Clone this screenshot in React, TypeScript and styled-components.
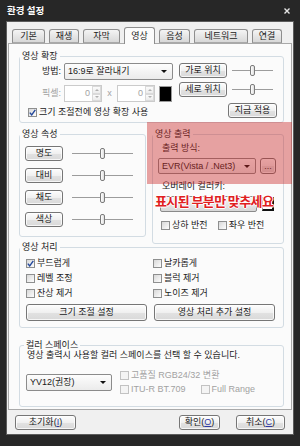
import styled, { createGlobalStyle } from "styled-components";

const GlobalStyle = createGlobalStyle`
  * { box-sizing: border-box; }
  html, body { margin: 0; padding: 0; background: #262626; }
  body {
    font-family: "Liberation Sans", "Noto Sans CJK KR", sans-serif;
    font-size: 9px;
    line-height: 11px;
    color: #1a1a1a;
  }
  button { font: inherit; color: inherit; }
`;

const Window = styled.div`
  width: 300px;
  height: 446px;
  display: flex;
  flex-direction: column;
  padding: 0 6px 11px;
  background: #272727;
`;

const TitleBar = styled.div`
  height: 21px;
  display: flex;
  align-items: center;
  justify-content: space-between;
  padding: 0 4px 0 1px;
  color: #fff;
  font-family: "Noto Sans CJK KR", sans-serif;
  font-size: 9.5px;
  font-weight: 700;
`;

const Panel = styled.div`
  position: relative;
  flex: 1;
  display: flex;
  flex-direction: column;
  background: #f0f0f0;
  border: 1px solid #5c5c5c;
`;

const TabStrip = styled.div`
  height: 21px;
  display: flex;
  align-items: flex-end;
  gap: 4px;
  padding-left: 5px;
`;

const Tab = styled.div<{ $w: number; $active?: boolean }>`
  position: relative;
  z-index: 1;
  width: ${(p) => p.$w}px;
  height: ${(p) => (p.$active ? 17 : 14)}px;
  margin-bottom: ${(p) => (p.$active ? -1 : 0)}px;
  display: flex;
  align-items: center;
  justify-content: center;
  padding-top: ${(p) => (p.$active ? 0 : 1)}px;
  border: 1px solid #8e8e8e;
  border-bottom: ${(p) => (p.$active ? "none" : "1px solid #a9a9a9")};
  border-radius: 3px 3px 0 0;
  background: ${(p) => (p.$active ? "#fbfbfb" : "linear-gradient(#f4f4f4, #d8d8d8)")};
  color: #222;
`;

const TabPage = styled.div`
  height: 367px;
  margin: 0 1px;
  padding: 7px 7px 0 10px;
  display: flex;
  flex-direction: column;
  background: #fbfbfb;
  border: 1px solid #a9a9a9;
`;

const Footer = styled.div`
  flex: 1;
  display: flex;
  align-items: center;
  gap: 16px;
  padding: 0 8px;
`;

const Spacer = styled.div`
  flex: 1;
`;

const Group = styled.fieldset<{ $h: number; $w?: number; $mt?: number }>`
  margin: ${(p) => p.$mt ?? 0}px 0 0;
  padding: 0;
  min-width: 0;
  width: ${(p) => (p.$w ? `${p.$w}px` : "auto")};
  height: ${(p) => p.$h}px;
  border: 1px solid #d3dce3;
  border-radius: 3px;
`;

const Legend = styled.legend<{ $indent?: number }>`
  margin-left: ${(p) => p.$indent ?? 0}px;
  padding: 0 2px;
  line-height: 10px;
  color: #222;
`;

const SplitRow = styled.div`
  display: flex;
  align-items: flex-start;
  gap: 6px;
  margin-top: 6px;
`;

const ExpandBody = styled.div`
  display: flex;
  gap: 6px;
`;

const Column = styled.div<{ $w: number }>`
  width: ${(p) => p.$w}px;
  display: flex;
  flex-direction: column;
`;

const FormRow = styled.div<{ $mt?: number; $pl?: number; $gap?: number; $end?: boolean }>`
  display: flex;
  align-items: center;
  justify-content: ${(p) => (p.$end ? "flex-end" : "flex-start")};
  margin-top: ${(p) => p.$mt ?? 0}px;
  padding-left: ${(p) => p.$pl ?? 0}px;
  gap: ${(p) => p.$gap ?? 0}px;
`;

const FieldLabel = styled.span<{ $muted?: boolean }>`
  width: 42px;
  margin-right: 2px;
  padding-right: 1px;
  text-align: right;
  color: ${(p) => (p.$muted ? "#a3a3a3" : "#1a1a1a")};
`;

const Caption = styled.div<{ $mt?: number; $pl?: number }>`
  margin-top: ${(p) => p.$mt ?? 0}px;
  padding-left: ${(p) => p.$pl ?? 0}px;
  line-height: 10px;
  white-space: nowrap;
`;

const Btn = styled.button<{ $w: number; $h?: number }>`
  width: ${(p) => p.$w}px;
  height: ${(p) => p.$h ?? 15}px;
  margin: 0;
  padding: 0;
  flex: none;
  display: flex;
  align-items: center;
  justify-content: center;
  border: 1px solid #767676;
  border-radius: 3px;
  background: linear-gradient(#fdfdfd 0%, #f0f0f0 50%, #e2e2e2 51%, #d9d9d9 100%);
  box-shadow: inset 0 0 0 1px rgba(255, 255, 255, 0.75);
  font-size: 9px;
  line-height: 11px;
  white-space: nowrap;
`;

const Key = styled.u`
  color: #2f3aa6;
`;

const Combo = styled.div<{ $w: number; $h: number }>`
  width: ${(p) => p.$w}px;
  height: ${(p) => p.$h}px;
  flex: none;
  display: flex;
  align-items: center;
  justify-content: space-between;
  padding: 0 5px 0 3px;
  border: 1px solid #8b8b8b;
  border-radius: 2px;
  background: linear-gradient(#fdfdfd, #ebebeb);
  white-space: nowrap;
`;

const Caret = styled.span`
  width: 0;
  height: 0;
  border-left: 3px solid transparent;
  border-right: 3px solid transparent;
  border-top: 3px solid #111;
`;

const Spin = styled.div`
  width: 38px;
  height: 17px;
  flex: none;
  display: flex;
  border: 1px solid #cbcbcb;
  background: #fff;
`;

const SpinValue = styled.span`
  flex: 1;
  padding-right: 2px;
  text-align: right;
  line-height: 15px;
  color: #a3a3a3;
`;

const SpinArrows = styled.div`
  width: 9px;
  display: flex;
  flex-direction: column;
`;

const SpinArrow = styled.span<{ $down?: boolean }>`
  flex: 1;
  display: flex;
  align-items: center;
  justify-content: center;
  border: 1px solid #dadada;
  background: linear-gradient(#fbfbfb, #ececec);
  &::after {
    content: "";
    border-left: 2px solid transparent;
    border-right: 2px solid transparent;
    ${(p) => (p.$down ? "border-top: 2px solid #b0b0b0;" : "border-bottom: 2px solid #b0b0b0;")}
  }
`;

const Times = styled.span`
  width: 15px;
  text-align: center;
  color: #a3a3a3;
`;

const Swatch = styled.span`
  width: 13px;
  height: 16px;
  margin-left: 4px;
  background: #000;
  border: 1px solid #9a9a9a;
`;

const Slider = styled.div<{ $w: number }>`
  width: ${(p) => p.$w}px;
  height: 11px;
  display: flex;
  align-items: center;
  justify-content: center;
  background: linear-gradient(#9c9c9c, #9c9c9c) center / 100% 1px no-repeat;
`;

const Thumb = styled.span`
  width: 5px;
  height: 11px;
  border: 1px solid #7b7b7b;
  border-radius: 2px;
  background: linear-gradient(90deg, #fff, #dedede);
`;

const CheckRow = styled.label<{ $disabled?: boolean }>`
  display: flex;
  align-items: center;
  gap: 2px;
  height: 11px;
  white-space: nowrap;
  color: ${(p) => (p.$disabled ? "#a2a2a2" : "#1a1a1a")};
`;

const Box = styled.span<{ $disabled?: boolean }>`
  width: 9px;
  height: 9px;
  flex: none;
  display: flex;
  align-items: center;
  justify-content: center;
  border: 1px solid ${(p) => (p.$disabled ? "#c2c2c2" : "#8e8f8f")};
  background: ${(p) => (p.$disabled ? "#f4f4f4" : "linear-gradient(135deg, #d8d8d8, #fdfdfd)")};
`;

const AttrList = styled.div`
  display: flex;
  flex-direction: column;
  gap: 7px;
  padding: 7px 0 0 5px;
`;

const FilterGrid = styled.div`
  display: grid;
  grid-template-columns: 127px 1fr;
  row-gap: 4px;
  padding: 6px 0 0 6px;
`;

const OptionCol = styled.div`
  display: flex;
  flex-direction: column;
  gap: 3px;
`;

const ColorBar = styled.div`
  width: 97px;
  height: 16px;
  border: 1px solid #8a8a8a;
  border-radius: 2px;
  background: linear-gradient(#f6f6f6, #d7d7d7);
`;

const ColorPick = styled.div`
  width: 12px;
  height: 14px;
  border: 1px solid #9a9a9a;
  border-right: 2px solid #111;
  border-bottom: 2px solid #111;
  background: #fff;
`;

const Highlight = styled.div`
  position: absolute;
  left: 140px;
  top: 100px;
  width: 145px;
  height: 62px;
  background: rgba(200, 35, 35, 0.42);
  pointer-events: none;
`;

const Note = styled.div`
  position: absolute;
  left: 148px;
  top: 171px;
  font-family: "Noto Sans CJK KR", sans-serif;
  font-size: 13px;
  font-weight: 700;
  line-height: 15px;
  letter-spacing: -0.6px;
  white-space: nowrap;
  color: #e0201e;
  text-shadow: 1px 0 0 #fff, -1px 0 0 #fff, 0 1px 0 #fff, 0 -1px 0 #fff;
`;

const Check = ({ label, checked, disabled }: { label: string; checked?: boolean; disabled?: boolean }) => (
  <CheckRow $disabled={disabled}>
    <Box $disabled={disabled}>
      {checked && (
        <svg width="7" height="7" viewBox="0 0 7 7">
          <path d="M0.8 3.6 L2.7 5.9 L6.3 0.8" fill="none" stroke="#24489c" strokeWidth="1.4" />
        </svg>
      )}
    </Box>
    {label}
  </CheckRow>
);

const SliderControl = ({ w }: { w: number }) => (
  <Slider $w={w}>
    <Thumb />
  </Slider>
);

const SpinBox = () => (
  <Spin>
    <SpinValue>0</SpinValue>
    <SpinArrows>
      <SpinArrow />
      <SpinArrow $down />
    </SpinArrows>
  </Spin>
);

const tabs = [
  { label: "기본", w: 33 },
  { label: "재생", w: 30 },
  { label: "자막", w: 37 },
  { label: "영상", w: 31, active: true },
  { label: "음성", w: 31 },
  { label: "네트워크", w: 54 },
  { label: "연결", w: 30 },
];

const attributes = ["명도", "대비", "채도", "색상"];

const filters = [
  { label: "부드럽게", checked: true },
  { label: "날카롭게" },
  { label: "레벨 조정" },
  { label: "블럭 제거" },
  { label: "잔상 제거" },
  { label: "노이즈 제거" },
];

export default function App() {
  return (
    <>
      <GlobalStyle />
      <Window>
        <TitleBar>
          환경 설정
          <svg width="6" height="6" viewBox="0 0 6 6">
            <path d="M0.5 0.5 L5.5 5.5 M5.5 0.5 L0.5 5.5" stroke="#e6e6e6" strokeWidth="1.4" />
          </svg>
        </TitleBar>

        <Panel>
          <TabStrip>
            {tabs.map((t) => (
              <Tab key={t.label} $w={t.w} $active={t.active}>
                {t.label}
              </Tab>
            ))}
          </TabStrip>

          <TabPage>
            <Group $h={72}>
              <Legend>영상 확장</Legend>
              <ExpandBody>
                <Column $w={153}>
                  <FormRow $mt={2}>
                    <FieldLabel>방법:</FieldLabel>
                    <Combo $w={109} $h={17}>
                      16:9로 잘라내기
                      <Caret />
                    </Combo>
                  </FormRow>
                  <FormRow $mt={5}>
                    <FieldLabel $muted>픽셀:</FieldLabel>
                    <SpinBox />
                    <Times>x</Times>
                    <SpinBox />
                    <Swatch />
                  </FormRow>
                  <FormRow $mt={5} $pl={8}>
                    <Check checked label="크기 조절전에 영상 확장 사용" />
                  </FormRow>
                </Column>
                <Column $w={98}>
                  <FormRow $mt={2} $gap={5}>
                    <Btn $w={48}>가로 위치</Btn>
                    <SliderControl w={41} />
                  </FormRow>
                  <FormRow $mt={4} $gap={5}>
                    <Btn $w={48}>세로 위치</Btn>
                    <SliderControl w={41} />
                  </FormRow>
                  <FormRow $mt={6} $end>
                    <Btn $w={49}>지금 적용</Btn>
                  </FormRow>
                </Column>
              </ExpandBody>
            </Group>

            <SplitRow>
              <Group $h={108} $w={127}>
                <Legend>영상 속성</Legend>
                <AttrList>
                  {attributes.map((a) => (
                    <FormRow key={a} $gap={9}>
                      <Btn $w={38}>{a}</Btn>
                      <SliderControl w={61} />
                    </FormRow>
                  ))}
                </AttrList>
              </Group>

              <Group $h={115} $w={132}>
                <Legend>영상 출력</Legend>
                <Caption $mt={4} $pl={9}>
                  출력 방식:
                </Caption>
                <FormRow $mt={5} $pl={5} $gap={4}>
                  <Combo $w={98} $h={16}>
                    EVR(Vista / .Net3)
                    <Caret />
                  </Combo>
                  <Btn $w={16} $h={16}>
                    ...
                  </Btn>
                </FormRow>
                <Caption $mt={7} $pl={9}>
                  오버레이 컬러키:
                </Caption>
                <FormRow $mt={5} $pl={7} $gap={5}>
                  <ColorBar />
                  <ColorPick />
                </FormRow>
                <FormRow $mt={8} $pl={8} $gap={10}>
                  <Check label="상하 반전" />
                  <Check label="좌우 반전" />
                </FormRow>
              </Group>
            </SplitRow>

            <Group $h={86} $mt={-2}>
              <Legend>영상 처리</Legend>
              <FilterGrid>
                {filters.map((f) => (
                  <Check key={f.label} label={f.label} checked={f.checked} />
                ))}
              </FilterGrid>
              <FormRow $mt={5} $pl={6} $gap={7}>
                <Btn $w={121} $h={17}>
                  크기 조절 설정
                </Btn>
                <Btn $w={121} $h={17}>
                  영상 처리 추가 설정
                </Btn>
              </FormRow>
            </Group>

            <Group $h={67} $mt={12}>
              <Legend $indent={4}>컬러 스페이스</Legend>
              <Caption $pl={7}>영상 출력시 사용할 컬러 스페이스를 선택 할 수 있습니다.</Caption>
              <FormRow $mt={10} $pl={6} $gap={8}>
                <Combo $w={86} $h={17}>
                  YV12(권장)
                  <Caret />
                </Combo>
                <OptionCol>
                  <Check disabled label="고품질 RGB24/32 변환" />
                  <FormRow $gap={15}>
                    <Check disabled label="ITU-R BT.709" />
                    <Check disabled label="Full Range" />
                  </FormRow>
                </OptionCol>
              </FormRow>
            </Group>
          </TabPage>

          <Footer>
            <Btn $w={61}>
              초기화(<Key>I</Key>)
            </Btn>
            <Spacer />
            <Btn $w={41}>
              확인(<Key>O</Key>)
            </Btn>
            <Btn $w={49}>
              취소(<Key>C</Key>)
            </Btn>
          </Footer>

          <Highlight />
          <Note>표시된 부분만 맞추세요</Note>
        </Panel>
      </Window>
    </>
  );
}
